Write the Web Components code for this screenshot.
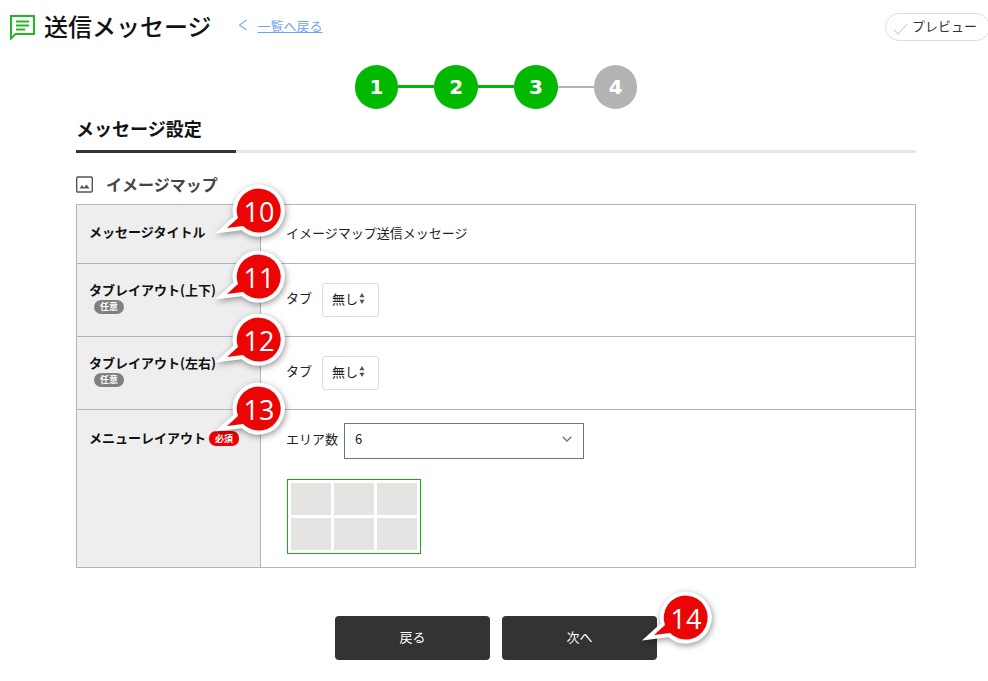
<!DOCTYPE html>
<html lang="ja">
<head>
<meta charset="utf-8">
<title>送信メッセージ</title>
<style>
    html, body { margin: 0; background: #fff; }
    body {
        width: 988px;
        height: 681px;
        overflow: hidden;
        position: relative;
        font-family: "Noto Sans CJK JP", "Noto Sans", sans-serif;
        font-size: 13px;
        color: #111;
    }
</style>
</head>
<body>
<page-header title-text="送信メッセージ" back-text="一覧へ戻る" preview-text="プレビュー"></page-header>
<step-bar current="3" total="4"></step-bar>
<form-panel tab="メッセージ設定" heading="イメージマップ">
    <form-row label="メッセージタイトル" height="58" align="center">イメージマップ送信メッセージ</form-row>
    <form-row label="タブレイアウト(上下)" tag="任意" height="72" align="center">
        <tab-select></tab-select>
    </form-row>
    <form-row label="タブレイアウト(左右)" tag="任意" height="72" align="center">
        <tab-select></tab-select>
    </form-row>
    <form-row label="メニューレイアウト" tag="必須" tag-inline height="157" align="top" last>
        <area-picker count="6"></area-picker>
    </form-row>
</form-panel>
<action-bar>
    <dark-button>戻る</dark-button>
    <dark-button>次へ</dark-button>
</action-bar>

<note-pin n="10" x="260" y="211"></note-pin>
<note-pin n="11" x="260" y="277"></note-pin>
<note-pin n="12" x="260" y="340"></note-pin>
<note-pin n="13" x="260" y="409"></note-pin>
<note-pin n="14" x="687" y="618"></note-pin>

<script>
class PageHeader extends HTMLElement {
    constructor() {
        super();
        this.attachShadow({ mode: 'open' });
    }

    connectedCallback() {
        this.shadowRoot.innerHTML = `
            <style>
                :host { display: flex; align-items: center; height: 54px; padding-left: 10px; box-sizing: border-box; }
                svg.msg { width: 26px; height: 26px; margin-right: 8px; flex: none; }
                h1 { margin: 0 26px 0 0; padding-bottom: 2px; font-size: 24px; font-weight: 500; line-height: 52px; color: #111; }
                .chev { width: 10px; height: 12px; margin-right: 10px; margin-bottom: 4px; flex: none; }
                a { color: #6fa3f7; font-size: 13px; text-decoration: underline; margin-bottom: 3px; }
                button {
                    margin-left: auto;
                    margin-right: -2px;
                    width: 105px;
                    height: 28px;
                    border: 1px solid #ddd;
                    border-radius: 14px;
                    background: #fff;
                    display: flex;
                    align-items: center;
                    padding: 0 0 0 7px;
                    font: inherit;
                    font-size: 13px;
                    color: #333;
                    box-sizing: border-box;
                }
                button svg { width: 15px; height: 12px; margin-right: 4px; margin-top: 3px; }
                button span { padding-bottom: 4px; }
            </style>
            <svg class="msg" viewBox="0 0 26 26" fill="none" stroke="#22b822" stroke-width="2">
                <path d="M1 2h23v18H5.5L1 24.5z"/>
                <path d="M6 7.5h13M6 11.5h13M6 15.5h9"/>
            </svg>
            <h1>${this.getAttribute('title-text')}</h1>
            <svg class="chev" viewBox="0 0 10 12" fill="none" stroke="#7aa7f5" stroke-width="1.1"><path d="M8.5 1 1.5 6l7 5"/></svg>
            <a href="#">${this.getAttribute('back-text')}</a>
            <button>
                <svg viewBox="0 0 15 12" fill="none" stroke="#d8d8d8" stroke-width="1.2"><path d="M1 6.5 5 11 14 1"/></svg>
                <span>${this.getAttribute('preview-text')}</span>
            </button>
        `;
    }
}

class StepBar extends HTMLElement {
    constructor() {
        super();
        this.attachShadow({ mode: 'open' });
    }

    connectedCallback() {
        let current = +this.getAttribute('current');
        let total = +this.getAttribute('total');
        let html = '';
        for (let i = 1; i <= total; i++) {
            if (i > 1) html += `<i class="${i <= current ? 'on' : ''}"></i>`;
            html += `<b class="${i <= current ? 'on' : ''}">${i}</b>`;
        }
        this.shadowRoot.innerHTML = `
            <style>
                :host { display: flex; justify-content: center; align-items: center; height: 43.5px; margin-top: 11px; margin-left: 4px; }
                b {
                    width: 43.5px;
                    height: 43.5px;
                    border-radius: 50%;
                    background: #b3b3b3;
                    color: #fff;
                    display: flex;
                    align-items: center;
                    justify-content: center;
                    font: bold 20px "DejaVu Sans", sans-serif;
                }
                b.on { background: #00b900; }
                i { width: 36.25px; height: 2px; background: #b3b3b3; }
                i.on { height: 3px; background: #00b900; }
            </style>
            ${html}
        `;
    }
}

class FormPanel extends HTMLElement {
    constructor() {
        super();
        this.attachShadow({ mode: 'open' });
    }

    connectedCallback() {
        this.shadowRoot.innerHTML = `
            <style>
                :host { display: block; margin: 0 72px 0 76px; }
                .tab {
                    height: 41.5px;
                    border-bottom: 3px solid #e1e7ee;
                    position: relative;
                    font-size: 18px;
                    font-weight: 700;
                    line-height: 38px;
                    color: #111;
                }
                .tab::after {
                    content: "";
                    position: absolute;
                    left: 0;
                    bottom: -3px;
                    width: 160px;
                    height: 3px;
                    background: #333;
                }
                h2 {
                    display: flex;
                    align-items: center;
                    margin: 0;
                    height: 51px;
                    padding-top: 12px;
                    box-sizing: border-box;
                    font-size: 16px;
                    font-weight: 700;
                    color: #444;
                }
                h2 span { padding-bottom: 1px; }
                h2 svg { width: 17px; height: 17px; margin-right: 13px; }
                .table { border-top: 1px solid #b5b5b5; border-left: 1px solid #b5b5b5; border-right: 1px solid #b5b5b5; }
            </style>
            <div class="tab">${this.getAttribute('tab')}</div>
            <h2>
                <svg viewBox="0 0 17 17" fill="none">
                    <rect x="0.7" y="1" width="15.6" height="15" rx="1" stroke="#555" stroke-width="1.4"/>
                    <path d="M3.5 12.5 6 9l2 2.5 2.5-3 3 4z" fill="#555"/>
                </svg>
                <span>${this.getAttribute('heading')}</span>
            </h2>
            <div class="table"><slot></slot></div>
        `;
    }
}

class FormRow extends HTMLElement {
    constructor() {
        super();
        this.attachShadow({ mode: 'open' });
    }

    connectedCallback() {
        let tag = this.getAttribute('tag');
        let inline = this.hasAttribute('tag-inline');
        let top = this.getAttribute('align') === 'top';
        let badge = tag ? `<tag-badge class="${tag === '必須' ? 'req' : ''}" ${inline ? 'inline' : ''}>${tag}</tag-badge>` : '';
        this.shadowRoot.innerHTML = `
            <style>
                :host {
                    display: grid;
                    grid-template-columns: 184px 1fr;
                    height: ${this.getAttribute('height')}px;
                    border-bottom: 1px solid #b5b5b5;
                }
                .th {
                    background: #eee;
                    border-right: 1px solid #b5b5b5;
                    padding: ${top ? '18px' : '0'} 0 ${top ? '0' : (tag ? '7px' : '4px')} 12px;
                    display: flex;
                    flex-direction: ${inline ? 'row' : 'column'};
                    align-items: flex-start;
                    justify-content: ${top ? 'flex-start' : 'center'};
                    font-weight: 700;
                    color: #111;
                    line-height: 20px;
                }
                .td {
                    padding: ${top ? '13px' : '0'} 0 ${top ? '0' : '4px'} 25px;
                    display: flex;
                    align-items: ${top ? 'flex-start' : 'center'};
                    color: #222;
                }
            </style>
            <div class="th"><span>${this.getAttribute('label')}</span>${badge}</div>
            <div class="td"><slot></slot></div>
        `;
    }
}

class TagBadge extends HTMLElement {
    constructor() {
        super();
        this.attachShadow({ mode: 'open' });
        this.shadowRoot.innerHTML = `
            <style>
                :host {
                    display: flex;
                    align-items: center;
                    justify-content: center;
                    width: 30px;
                    height: 14px;
                    margin: 0 0 0 5px;
                    border-radius: 7px;
                    background: #808080;
                    color: #fff;
                    font-size: 9px;
                    font-weight: 700;
                    line-height: 14px;
                }
                :host(.req) { background: #f00000; }
                :host([inline]) { margin: 3px 0 0 3px; height: 15px; }
            </style>
            <slot></slot>
        `;
    }
}

class TabSelect extends HTMLElement {
    constructor() {
        super();
        this.attachShadow({ mode: 'open' });
        this.shadowRoot.innerHTML = `
            <style>
                :host { display: flex; align-items: center; padding-top: 4px; }
                span { padding-bottom: 6px; }
                .box {
                    display: flex;
                    align-items: center;
                    width: 57px;
                    height: 34px;
                    margin-left: 10px;
                    padding: 0 0 4px 9px;
                    border: 1px solid #ddd;
                    border-radius: 3px;
                    box-sizing: border-box;
                    background: #fff;
                    color: #222;
                }
                svg { width: 6px; height: 11px; margin-left: 1px; }
            </style>
            <span>タブ</span>
            <div class="box">無し<svg viewBox="0 0 6 11" fill="#555"><path d="M3 0l2.6 4.2H.4zM3 11 .4 6.8h5.2z"/></svg></div>
        `;
    }
}

class AreaPicker extends HTMLElement {
    constructor() {
        super();
        this.attachShadow({ mode: 'open' });
    }

    connectedCallback() {
        let count = +this.getAttribute('count');
        this.shadowRoot.innerHTML = `
            <style>
                :host { display: block; }
                .line { display: flex; align-items: center; height: 36px; }
                .line span { padding-bottom: 6px; }
                .box {
                    display: flex;
                    align-items: center;
                    justify-content: space-between;
                    width: 240px;
                    height: 36px;
                    margin-left: 6px;
                    padding: 0 11px 5px 10px;
                    border: 1px solid #6c757d;
                    box-sizing: border-box;
                    background: #fff;
                }
                .box svg { width: 10px; height: 6px; }
                .grid {
                    display: grid;
                    grid-template-columns: repeat(3, 40px);
                    grid-auto-rows: 32px;
                    gap: 3px;
                    width: max-content;
                    margin: 20px 0 0 1px;
                    padding: 3px;
                    border: 1px solid #1aad19;
                }
                .grid div { background: #e5e4e2; }
            </style>
            <div class="line">
                <span>エリア数</span>
                <div class="box">${count}<svg viewBox="0 0 10 6" fill="none" stroke="#6c757d" stroke-width="1.3"><path d="M.7.7 5 5 9.3.7"/></svg></div>
            </div>
            <div class="grid">${'<div></div>'.repeat(count)}</div>
        `;
    }
}

class ActionBar extends HTMLElement {
    constructor() {
        super();
        this.attachShadow({ mode: 'open' });
        this.shadowRoot.innerHTML = `
            <style>
                :host { display: flex; justify-content: center; gap: 12px; margin: 48px 0 0 4px; }
            </style>
            <slot></slot>
        `;
    }
}

class DarkButton extends HTMLElement {
    constructor() {
        super();
        this.attachShadow({ mode: 'open' });
        this.shadowRoot.innerHTML = `
            <style>
                :host {
                    display: flex;
                    align-items: center;
                    justify-content: center;
                    width: 155px;
                    height: 44px;
                    padding-bottom: 3px;
                    box-sizing: border-box;
                    border-radius: 4px;
                    background: #333;
                    color: #fff;
                    font-size: 13px;
                }
            </style>
            <slot></slot>
        `;
    }
}

// numbered callouts sit on top of the screenshot, so they are placed by coordinates
class NotePin extends HTMLElement {
    constructor() {
        super();
        this.attachShadow({ mode: 'open' });
    }

    connectedCallback() {
        let shape = 'M-22 7A22 22 0 1 1-17 15L-33 17Z';
        this.shadowRoot.innerHTML = `
            <style>
                :host {
                    position: absolute;
                    left: ${this.getAttribute('x') - 60}px;
                    top: ${this.getAttribute('y') - 40}px;
                    width: 100px;
                    height: 80px;
                    display: block;
                }
                svg { position: absolute; inset: 0; overflow: visible; filter: drop-shadow(1px 2px 3px rgba(0,0,0,.4)); }
                span {
                    position: absolute;
                    left: 37px;
                    top: 18px;
                    width: 44px;
                    height: 44px;
                    display: flex;
                    align-items: center;
                    justify-content: center;
                    color: #fff;
                    font: 27px "Open Sans", sans-serif;
                }
            </style>
            <svg viewBox="-60 -40 100 80" width="100" height="80">
                <path d="${shape}" fill="#fff" stroke="#fff" stroke-width="8" stroke-linejoin="miter" stroke-miterlimit="10"/>
                <path d="${shape}" fill="#eb0505"/>
            </svg>
            <span>${this.getAttribute('n')}</span>
        `;
    }
}

customElements.define('page-header', PageHeader);
customElements.define('step-bar', StepBar);
customElements.define('form-panel', FormPanel);
customElements.define('form-row', FormRow);
customElements.define('tag-badge', TagBadge);
customElements.define('tab-select', TabSelect);
customElements.define('area-picker', AreaPicker);
customElements.define('action-bar', ActionBar);
customElements.define('dark-button', DarkButton);
customElements.define('note-pin', NotePin);
</script>
</body>
</html>
